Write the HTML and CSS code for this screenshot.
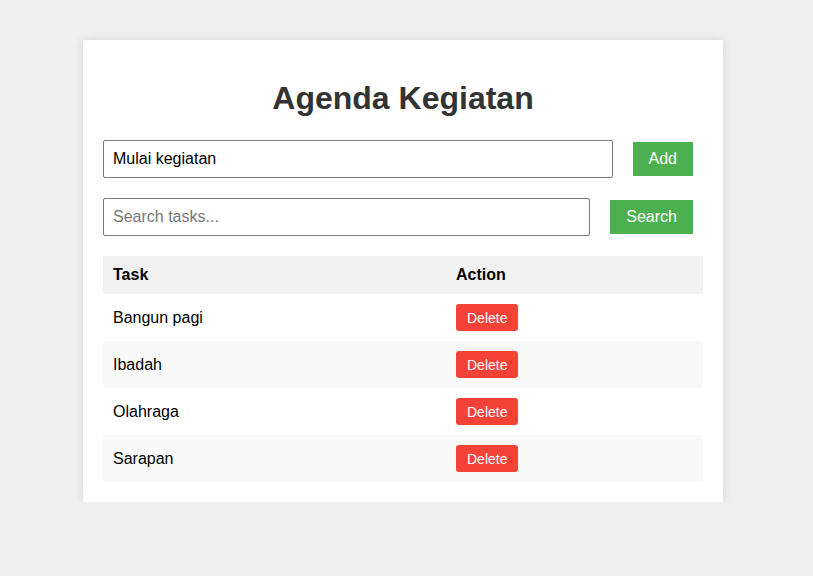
FILE: index.html
```html
<!DOCTYPE html>
<html>
<head>
<meta charset="utf-8">
<link rel="stylesheet" href="styles.css">
</head>
<body>
<div class="container">
  <h1>Agenda Kegiatan</h1>
  <div class="form-row">
    <input class="field" type="text" value="Mulai kegiatan">
    <button class="btn-green">Add</button>
  </div>
  <div class="form-row">
    <input class="field" type="text" placeholder="Search tasks...">
    <button class="btn-green">Search</button>
  </div>
  <table class="tasks">
    <thead>
      <tr><th class="col-task">Task</th><th>Action</th></tr>
    </thead>
    <tbody>
      <tr><td>Bangun pagi</td><td><button class="btn-del">Delete</button></td></tr>
      <tr><td>Ibadah</td><td><button class="btn-del">Delete</button></td></tr>
      <tr><td>Olahraga</td><td><button class="btn-del">Delete</button></td></tr>
      <tr><td>Sarapan</td><td><button class="btn-del">Delete</button></td></tr>
    </tbody>
  </table>
</div>
</body>
</html>
```
FILE: styles.css
```css
html, body {
  margin: 0;
  background: #f0f0f0;
  font-family: "Liberation Sans", Arial, sans-serif;
}
body {
  padding: 40px 7px 0 0;
}
.container {
  width: 600px;
  margin: 0 auto;
  padding: 20px;
  background: #fff;
  box-shadow: 0 0 10px rgba(0, 0, 0, 0.12);
}
h1 {
  text-align: center;
  color: #333;
  font-size: 32px;
  margin: 20px 0 23px;
  line-height: 37px;
}
.form-row {
  display: flex;
  align-items: center;
  gap: 20px;
  padding-right: 10px;
  margin-bottom: 20px;
}
.field {
  flex: 1;
  height: 38px;
  box-sizing: border-box;
  padding: 0 9px;
  border: 1px solid #777;
  border-radius: 2px;
  font-family: "Liberation Sans", Arial, sans-serif;
  font-size: 16px;
  color: #000;
}
.field::placeholder {
  color: #777;
}
.btn-green {
  height: 34px;
  padding: 0 16px;
  border: none;
  background: #4caf50;
  color: #fff;
  font-family: "Liberation Sans", Arial, sans-serif;
  font-size: 16px;
}
.tasks {
  width: 600px;
  border-collapse: collapse;
  text-align: left;
  font-size: 16px;
  color: #000;
}
.tasks th {
  background: #f2f2f2;
  padding: 10px 10px;
  height: 18px;
  font-weight: bold;
}
.tasks .col-task {
  width: 323px;
}
.tasks td {
  padding: 10px 10px;
  height: 27px;
}
.tasks tbody tr:nth-child(even) {
  background: #f9f9f9;
}
.btn-del {
  display: block;
  height: 27px;
  padding: 0 11px;
  border: none;
  border-radius: 3px;
  background: #f44336;
  color: #fff;
  font-family: "Liberation Sans", Arial, sans-serif;
  font-size: 14px;
}
```
